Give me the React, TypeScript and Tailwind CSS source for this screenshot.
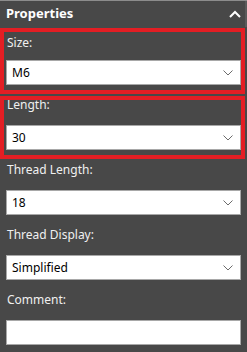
import React from 'react';

const Chevron = () => (
  <svg className="w-[10px] h-[6px] text-[#6b6b6b]" viewBox="0 0 10 6" fill="none" stroke="currentColor">
    <path d="M0.5 0.5L5 5L9.5 0.5" strokeWidth={1} />
  </svg>
);

interface FieldProps {
  label: string;
  value?: string;
  first?: boolean;
  select?: boolean;
}

const Field = ({ label, value, first, select = true }: FieldProps) => (
  <div className={first ? 'pt-[8px]' : 'pt-[12px]'}>
    <div className={`h-[16px] leading-[16px] text-[12px] text-[#f0f0f0] pl-[7px] ${first ? 'mb-[9px]' : 'mb-[12px]'}`}>
      {label}
    </div>
    <div className="mx-[6px] h-[25px] bg-white border border-[#a8a8a8] flex items-center justify-between pl-[5px] pr-[7px]">
      <span className="text-[12px] text-black leading-none">{value}</span>
      {select && <Chevron />}
    </div>
  </div>
);

export default function App() {
  return (
    <div
      className="relative w-[247px] h-[352px] bg-[#484848] border-t border-[#8c8c8c] overflow-hidden"
      style={{ fontFamily: '"Noto Sans", "Open Sans", sans-serif' }}
    >
      <div className="h-[26px] flex items-center justify-between pl-[6px] pr-[4px] border-r-2 border-[#5a5a5a]">
        <span className="text-[13px] font-bold text-white">Properties</span>
        <svg className="w-[12px] h-[8px] text-white" viewBox="0 0 12 8" fill="none" stroke="currentColor">
          <path d="M1 7L6 2L11 7" strokeWidth={2} />
        </svg>
      </div>
      <Field label="Size:" value="M6" first />
      <Field label="Length:" value="30" />
      <Field label="Thread Length:" value="18" />
      <Field label="Thread Display:" value="Simplified" />
      <Field label="Comment:" select={false} />

      <div className="absolute left-0 top-[27px] w-[245px] h-[66px] border-4 border-[#e31e24]" />
      <div className="absolute left-0 top-[95px] w-[245px] h-[63px] border-4 border-[#e31e24]" />
    </div>
  );
}
